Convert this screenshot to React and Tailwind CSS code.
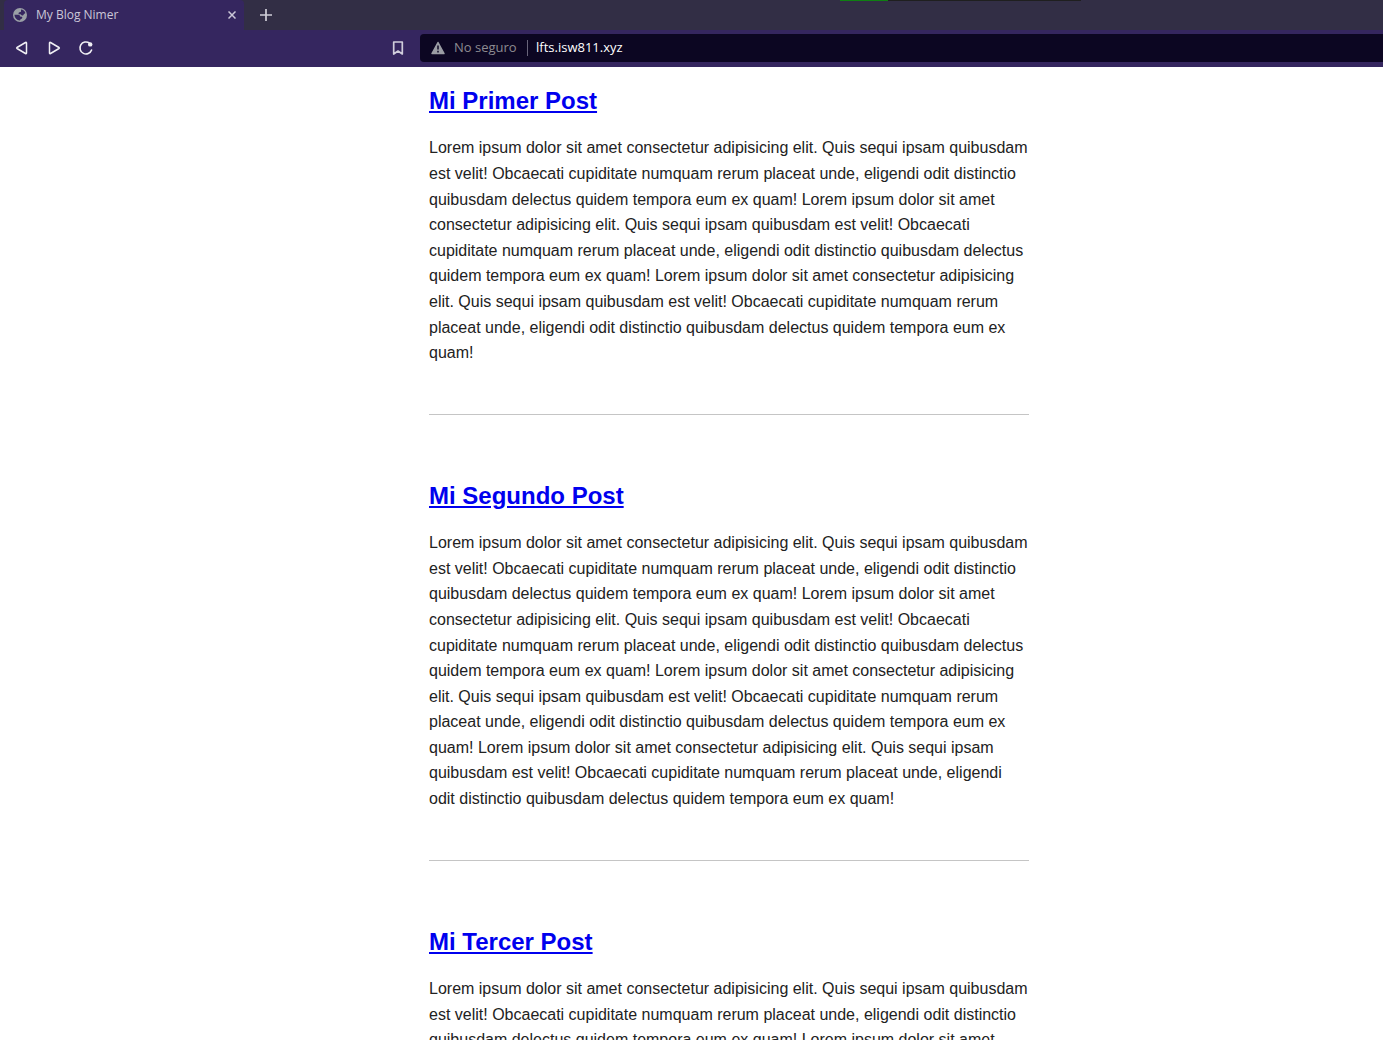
import React from "react";

const LOREM =
  "Lorem ipsum dolor sit amet consectetur adipisicing elit. Quis sequi ipsam quibusdam est velit! Obcaecati cupiditate numquam rerum placeat unde, eligendi odit distinctio quibusdam delectus quidem tempora eum ex quam!";

const posts = [
  { title: "Mi Primer Post", repeat: 3 },
  { title: "Mi Segundo Post", repeat: 4 },
  { title: "Mi Tercer Post", repeat: 3 },
];

function GlobeIcon() {
  return (
    <svg className="size-4 shrink-0" viewBox="0 0 16 16" aria-hidden="true">
      <circle cx="8" cy="8" r="7" fill="#9a9fa6" />
      <g fill="#35265f">
        <path d="M9 2.500c2 .2 3.700 1.500 4.400 3.400l-1.600 1.300c-.3.900-.9 1.300-1.900 1.200L8.500 7.200H6.800c-.5-.8-.2-1.600.7-2l1.500-.4z" />
        <path d="M2.500 7.800h3.800c1.200.1 1.700.8 1.800 1.700l1.700.3c.8.600.6 1.500-.2 2l-1.100.4-.5 1.300c-2.900 0-5.400-2.500-5.500-5.700z" />
      </g>
    </svg>
  );
}

function Triangle({ flip }) {
  return (
    <svg className="size-4" viewBox="0 0 16 16" fill="none" stroke="#f0eff4" strokeWidth="1.5" strokeLinejoin="round" aria-hidden="true">
      <path d={flip ? "M12.5 3v10q0 1-1 .5L3 8.500q-.7-.5 0-1L11.500 2.500q1-.5 1 .5z" : "M3.500 3v10q0 1 1 .5L13 8.500q.7-.5 0-1L4.500 2.500q-1-.5-1 .5z"} />
    </svg>
  );
}

function ReloadIcon() {
  return (
    <svg className="size-4" viewBox="0 0 16 16" fill="none" aria-hidden="true">
      <path d="M11.500 3.100A6 6 0 1 0 13.600 10" stroke="#f0eff4" strokeWidth="1.600" strokeLinecap="round" />
      <circle cx="12.200" cy="4.400" r="2.200" fill="#f0eff4" />
    </svg>
  );
}

function Browser() {
  return (
    <header className="font-['Open_Sans',sans-serif]">
      <div className="relative flex h-[30px] bg-[#322e45]">
        <div className="absolute top-0 left-[840px] flex h-px w-[241px] bg-[#1f1f1f]">
          <div className="w-12 bg-[#0f7f12]" />
        </div>
        <div className="ml-1 flex w-60 items-center rounded-t-sm bg-[#35265f] pr-1 pl-2">
          <GlobeIcon />
          <span className="ml-2 flex-1 text-xs font-medium text-[#cbc7d8]">My Blog Nimer</span>
          <button type="button" aria-label="Close tab" className="flex size-4 items-center justify-center">
            <svg className="size-2" viewBox="0 0 8 8" stroke="#cbc7d8" strokeWidth="1.500" aria-hidden="true">
              <path d="M0.500 0.500l7 7M7.500 0.500l-7 7" />
            </svg>
          </button>
        </div>
        <button type="button" aria-label="New tab" className="ml-3 flex w-5 items-center justify-center">
          <svg className="size-3" viewBox="0 0 12 12" stroke="#d0ced8" strokeWidth="1.700" aria-hidden="true">
            <path d="M6 0v12M0 6h12" />
          </svg>
        </button>
      </div>
      <div className="flex h-[37px] items-center bg-[#35265f] pb-px">
        <nav className="flex w-[420px] items-center gap-4 pr-[14px] pl-[14px]">
          <button type="button" aria-label="Back"><Triangle flip /></button>
          <button type="button" aria-label="Forward"><Triangle /></button>
          <button type="button" aria-label="Reload"><ReloadIcon /></button>
          <button type="button" aria-label="Bookmark" className="ml-auto">
            <svg className="size-4" viewBox="0 0 16 16" fill="none" stroke="#d0cddb" strokeWidth="1.700" strokeLinejoin="round" aria-hidden="true">
              <path d="M3.700 2h8.600v12L8 11l-4.300 3z" />
            </svg>
          </button>
        </nav>
        <div className="flex h-7 min-w-0 flex-1 items-center rounded-l-sm bg-[#0c0622] pl-[10px] text-[13px]">
          <svg className="size-4" viewBox="0 0 16 16" aria-hidden="true">
            <path d="M8 2.500L14 13.500H2z" fill="#9b9da4" stroke="#9b9da4" strokeWidth="1.500" strokeLinejoin="round" />
            <path d="M8 5.500v4M8 10.800v1.700" stroke="#0c0622" strokeWidth="1.500" />
          </svg>
          <span className="ml-2 w-[65px] whitespace-nowrap text-[#8d8b91]">No seguro</span>
          <span className="mx-2 h-4 w-px bg-[#68647a]" />
          <input
            type="text"
            aria-label="Address"
            defaultValue="lfts.isw811.xyz"
            className="min-w-0 flex-1 bg-transparent text-white outline-none"
          />
        </div>
      </div>
    </header>
  );
}

export default function App() {
  return (
    <div className="flex h-screen flex-col overflow-hidden bg-white">
      <Browser />
      <main className="min-h-0 flex-1 overflow-hidden pt-[15px] pl-[75px] font-['Liberation_Sans',Arial,sans-serif] text-[#222222]">
        <div className="mx-auto max-w-[600px]">
          {posts.map((post, i) => (
            <article key={post.title} className={i > 0 ? "mt-12 border-t border-[#c5c5c5] pt-[62px]" : ""}>
              <h2 className="text-2xl leading-[1.6] font-bold">
                <a href="#" className="text-[#0000ee] underline">{post.title}</a>
              </h2>
              <p className="mt-[15px] text-base leading-[1.6]">
                {Array(post.repeat).fill(LOREM).join(" ")}
              </p>
            </article>
          ))}
        </div>
      </main>
    </div>
  );
}
